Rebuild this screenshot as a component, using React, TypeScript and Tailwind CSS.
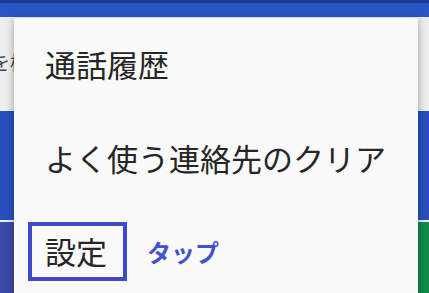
import React from "react";

export default function App() {
  return (
    <div
      className="relative w-[429px] h-[293px] overflow-hidden bg-[#fafafa]"
      style={{ fontFamily: '"Noto Sans CJK JP", "Noto Sans", sans-serif' }}
    >
      {/* background app */}
      <div className="flex flex-col w-full h-full">
        <div className="h-[3px] bg-[#1d3a9c]" />
        <div className="h-[14px] bg-[#2a55c1]" />
        <div className="h-[94px] bg-[#eeeeee] flex items-center">
          <span className="ml-[-9px] mt-[-6px] text-[19px] leading-none text-[#444]">
            を検索
          </span>
        </div>
        <div className="h-[109px] bg-[#2651bd]" />
        <div className="h-[2px] bg-[#e8ecf8]" />
        <div className="flex-1 flex">
          <div className="flex-1 bg-[#3b4aa7]" />
          <div className="flex-1 bg-[#0f8b4e]" />
        </div>
      </div>

      {/* overflow menu */}
      <div className="absolute left-[14px] top-[18px] w-[404px] h-[300px] bg-[#fafafa] rounded-[3px] shadow-[0_2px_8px_rgba(0,0,0,0.35)] flex flex-col">
        <div className="h-[93px] flex items-center pl-[31px] pb-[3px] text-[31px] leading-none text-[#262626]">
          通話履歴
        </div>
        <div className="h-[93px] flex items-center pl-[31px] text-[31px] leading-none text-[#262626]">
          よく使う連絡先のクリア
        </div>
        <div className="relative h-[93px] flex items-center pl-[31px] text-[31px] leading-none text-[#262626]">
          <span>設定</span>
          <span className="ml-[40px] mt-[2px] text-[24px] font-bold text-[#4350d2]">
            タップ
          </span>
          <div className="absolute left-[14px] top-[18px] w-[99px] h-[59px] border-[4px] border-[#4048cc]" />
        </div>
      </div>
    </div>
  );
}
